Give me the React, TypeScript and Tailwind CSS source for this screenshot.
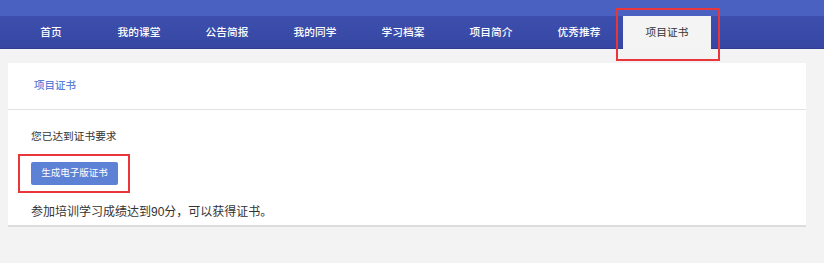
import React from "react";

const navItems = ["首页", "我的课堂", "公告简报", "我的同学", "学习档案", "项目简介", "优秀推荐", "项目证书"];

export default function App() {
  const font = { fontFamily: '"Liberation Sans", "Noto Sans CJK SC", sans-serif' };
  return (
    <div className="w-[824px] h-[263px] bg-[#f3f3f3] overflow-hidden" style={font}>
      <div className="h-[16px] bg-[#4a61c2]" />
      <nav className="h-[33px] bg-gradient-to-b from-[#3d4fae] to-[#3646a2] border-b border-[#2f3c92] flex pl-[7px] relative">
        {navItems.map((item, i) => {
          const active = i === navItems.length - 1;
          return (
            <div
              key={item}
              className={
                active
                  ? "relative w-[88px] h-[33px] -mb-px flex items-center justify-center bg-[#f4f4f4] text-[#333] text-[10.7px]"
                  : "w-[88px] h-full flex items-center justify-center text-white text-[10.7px] font-medium"
              }
            >
              {item}
              {active && (
                <div className="absolute left-[-7px] top-[-8px] right-[-9px] bottom-[-12px] border-2 border-[#e8363b] pointer-events-none" />
              )}
            </div>
          );
        })}
      </nav>
      <div className="ml-[8px] mr-[18px] mt-[14px] bg-white border-b-2 border-[#dcdcdc]">
        <div className="h-[47px] flex items-center pl-[26px] border-b border-[#e2e2e2] text-[10.5px] text-[#5b80d8] font-medium">
          项目证书
        </div>
        <div className="px-[23px] pt-[18px] pb-[4px]">
          <p className="text-[10.7px] leading-[16px] text-[#333]">您已达到证书要求</p>
          <div className="relative inline-block mt-[18px]">
            <button className="w-[87px] h-[23px] bg-[#5d82d5] rounded-[2px] text-white text-[9.5px] flex items-center justify-center">
              生成电子版证书
            </button>
            <div className="absolute left-[-13px] right-[-12px] top-[-8px] bottom-[-8px] border-2 border-[#e8363b] pointer-events-none" />
          </div>
          <p className="mt-[18px] text-[12px] leading-[18px] text-[#333]">参加培训学习成绩达到90分，可以获得证书。</p>
        </div>
      </div>
    </div>
  );
}
